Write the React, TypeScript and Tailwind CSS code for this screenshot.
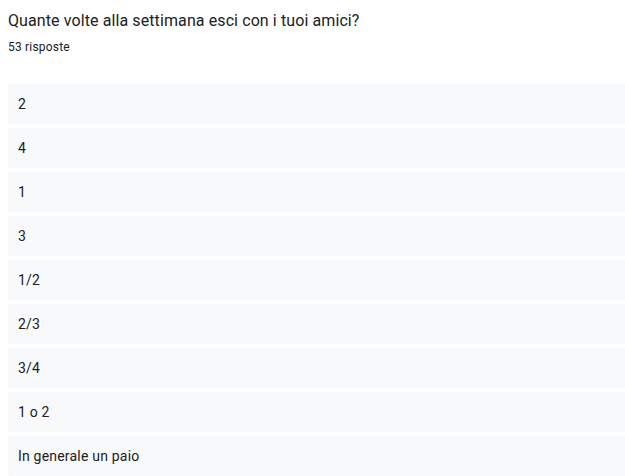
import React from 'react';

const answers = ['2', '4', '1', '3', '1/2', '2/3', '3/4', '1 o 2', 'In generale un paio'];

function App() {
  return (
    <div className="h-[476px] w-full overflow-hidden bg-white font-['Roboto',sans-serif] text-[#202124]">
      <div className="pl-2 pt-[9px]">
        <h2 className="text-[16px] leading-[24px] tracking-[0.1px]">Quante volte alla settimana esci con i tuoi amici?</h2>
        <p className="mt-[4px] text-[12px] leading-[20px] tracking-[0.2px]">53 risposte</p>

        <div className="mt-[27px] -mr-4 flex flex-col gap-1">
          {answers.map((answer, index) => (
            <div
              key={index}
              className="flex h-10 items-center rounded-l bg-[#f8f9fa] pl-[10px] text-[14px] tracking-[0.2px]"
            >
              {answer}
            </div>
          ))}
        </div>
      </div>
    </div>
  );
}

export default App;
